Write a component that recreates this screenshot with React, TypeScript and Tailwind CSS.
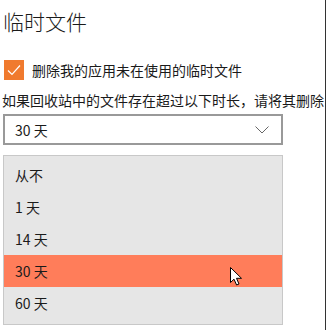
const options = ["从不", "1 天", "14 天", "30 天", "60 天"];
const selected = "30 天";

function Cursor() {
  return (
    <svg
      width="13"
      height="19"
      viewBox="0 0 13 19"
      className="absolute left-[230px] top-[267px]"
    >
      <path
        d="M0.5 0.5 L0.5 15.5 L4 12.2 L6.6 18 L9 17 L6.5 11.3 L11.5 11.3 Z"
        fill="#fff"
        stroke="#000"
        strokeWidth="1"
        strokeLinejoin="round"
      />
    </svg>
  );
}

export default function App() {
  return (
    <div
      className="relative h-[330px] w-[327px] overflow-hidden bg-white text-[#1a1a1a]"
      style={{ fontFamily: '"Noto Sans CJK SC", "Noto Sans", sans-serif' }}
    >
      {/* right edge divider */}
      <div className="absolute right-[1px] top-0 h-full w-px bg-[#333]" />

      <div className="w-[324px] overflow-hidden">
        <h1 className="ml-[3px] mt-[6px] text-[21px] font-light leading-[30px]">
          临时文件
        </h1>

        <label className="ml-[4px] mt-[24px] flex items-center gap-[8px]">
          <span className="flex h-[20px] w-[20px] items-center justify-center bg-[#f07a2e]">
            <svg width="14" height="12" viewBox="0 0 14 12">
              <path
                d="M1 6.5 L5 10.5 L13 1.5"
                fill="none"
                stroke="#fff"
                strokeWidth="1.2"
              />
            </svg>
          </span>
          <span className="text-[14px] leading-[20px]">删除我的应用未在使用的临时文件</span>
        </label>

        <p className="ml-[2px] mt-[10px] whitespace-nowrap text-[14px] leading-[20px]">
          如果回收站中的文件存在超过以下时长，请将其删除
        </p>

        <div className="ml-[3px] mt-[4px] flex h-[31px] w-[280px] items-center justify-between border-2 border-[#999] px-[10px]">
          <span className="text-[14px] leading-[20px]">30 天</span>
          <svg width="14" height="8" viewBox="0 0 14 8" className="mr-[2px]">
            <path d="M0.5 0.5 L7 7 L13.5 0.5" fill="none" stroke="#666" strokeWidth="1" />
          </svg>
        </div>

        <ul className="ml-[3px] mt-[10px] w-[280px] border border-[#c8c8c8] bg-[#e6e6e6] pb-[5px] pt-[3px]">
          {options.map((o) => (
            <li
              key={o}
              className={`flex h-[32px] items-center px-[11px] text-[14px] ${
                o === selected ? "bg-[#ff7d5a]" : ""
              }`}
            >
              {o}
            </li>
          ))}
        </ul>
        <p className="ml-[3px] mt-[1px] whitespace-nowrap text-[14px] leading-[20px] text-[#444]">
          删除回收站中超过以上时长的文件以节省磁盘空间
        </p>
      </div>

      <Cursor />
    </div>
  );
}
